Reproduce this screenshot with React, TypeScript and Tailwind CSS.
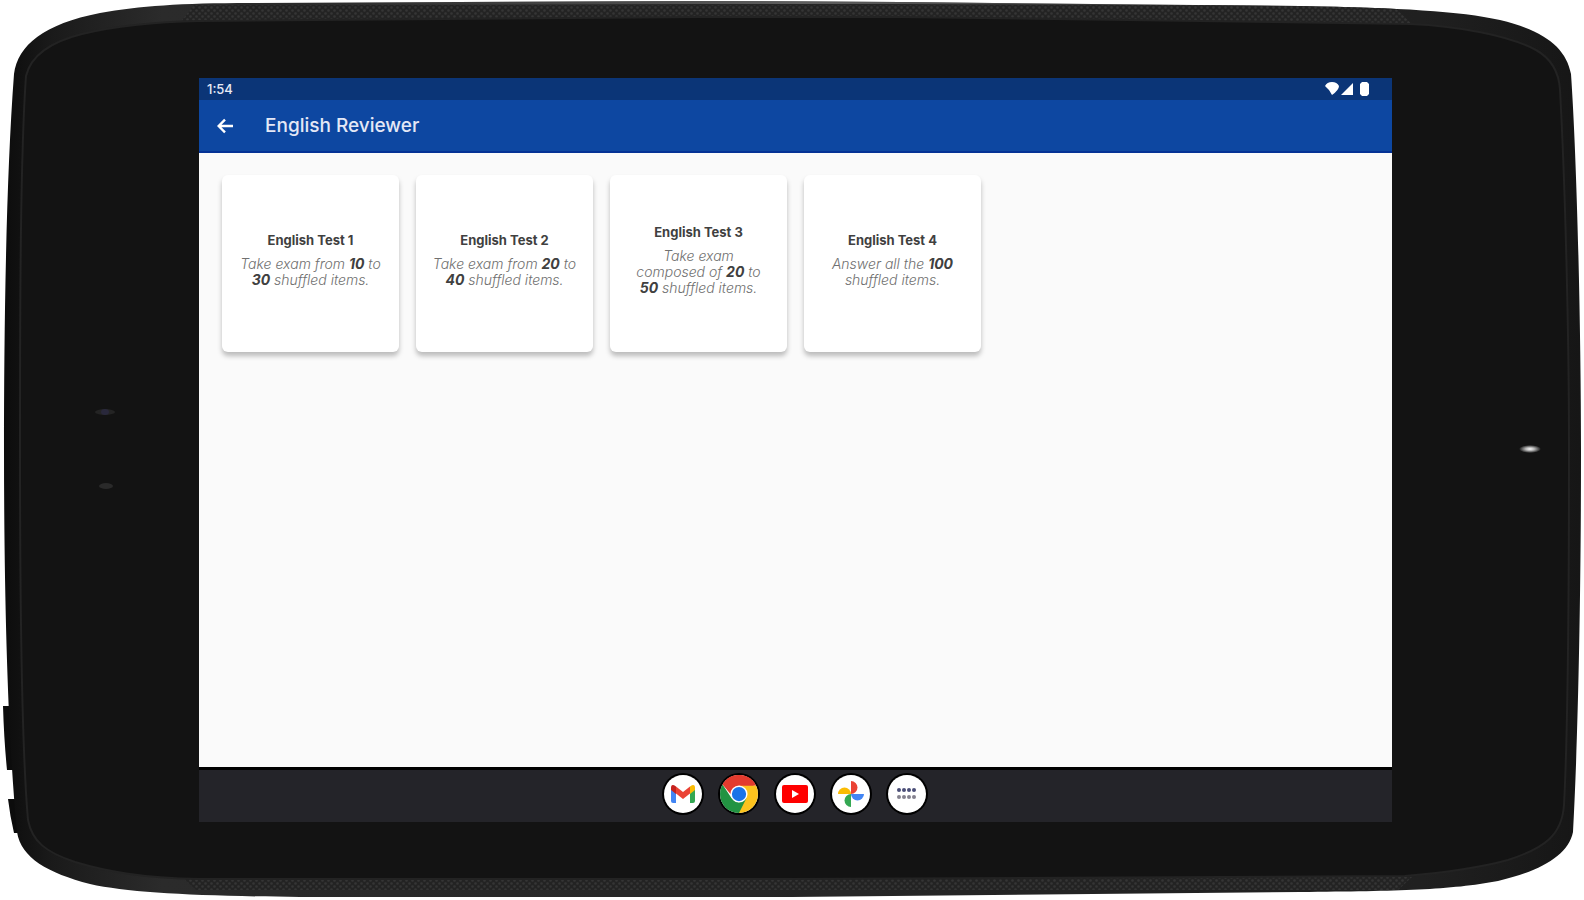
import type { ReactNode } from 'react';

type Exam = {
  id: number;
  title: string;
  description: ReactNode;
};

const exams: Exam[] = [
  {
    id: 1,
    title: 'English Test 1',
    description: (
      <>
        Take exam from <b>10</b> to
        <br />
        <b>30</b> shuffled items.
      </>
    ),
  },
  {
    id: 2,
    title: 'English Test 2',
    description: (
      <>
        Take exam from <b>20</b> to
        <br />
        <b>40</b> shuffled items.
      </>
    ),
  },
  {
    id: 3,
    title: 'English Test 3',
    description: (
      <>
        Take exam
        <br />
        composed of <b>20</b> to
        <br />
        <b>50</b> shuffled items.
      </>
    ),
  },
  {
    id: 4,
    title: 'English Test 4',
    description: (
      <>
        Answer all the <b>100</b>
        <br />
        shuffled items.
      </>
    ),
  },
];

const bodyPath =
  'M4 450C4 330 6 180 14 74C18 45 44 24 100 13C140 6 180 3 250 3L700 1L900 2L1300 6C1400 8 1460 11 1500 20C1545 31 1566 48 1571 74C1577 160 1581 330 1581 450C1581 600 1578 740 1573 832C1568 856 1540 871 1498 881C1450 890 1400 891 1300 892L792 897L300 897C200 896 130 893 90 884C48 873 21 858 17 832C8 740 4 600 4 450Z';

function TabletBody() {
  return (
    <svg
      className="absolute inset-0 h-full w-full"
      viewBox="0 0 1584 900"
      preserveAspectRatio="none"
      aria-hidden="true"
    >
      <defs>
        <pattern id="grille" width="6" height="6" patternUnits="userSpaceOnUse">
          <rect width="6" height="6" fill="#232323" />
          <circle cx="1.5" cy="1.5" r="1.3" fill="#353535" />
          <circle cx="4.5" cy="4.5" r="1.3" fill="#353535" />
        </pattern>
        <clipPath id="body-clip">
          <path d={bodyPath} />
        </clipPath>
        <linearGradient id="rim" x1="0" x2="1" y1="0" y2="0">
          <stop offset="0" stopColor="#0c0c0c" />
          <stop offset="0.03" stopColor="#1a1a1a" />
          <stop offset="0.1" stopColor="#2b2b2b" />
          <stop offset="0.9" stopColor="#202020" />
          <stop offset="1" stopColor="#161616" />
        </linearGradient>
        <linearGradient id="top-shine" x1="0" x2="1" y1="0" y2="0">
          <stop offset="0" stopColor="#5a5a5a" stopOpacity="0" />
          <stop offset="0.5" stopColor="#5e5e5e" />
          <stop offset="1" stopColor="#5a5a5a" stopOpacity="0" />
        </linearGradient>
        <radialGradient id="led">
          <stop offset="0" stopColor="#ffffff" />
          <stop offset="0.4" stopColor="#b5b5b5" />
          <stop offset="1" stopColor="#131313" />
        </radialGradient>
      </defs>
      {/* side buttons */}
      <path d="M3 706H20V770H7Q4 740 3 706zM8 799H24V833H14Q10 816 8 799z" fill="#0c0c0c" />
      <path d={bodyPath} fill="url(#rim)" />
      <g clipPath="url(#body-clip)">
        <path d="M182 20L194 5H1392L1412 24H182z" fill="url(#grille)" />
        <path d="M182 877H1412L1398 890H196z" fill="url(#grille)" />
        <path d="M300 0H1300V6L900 4H700L300 5z" fill="url(#top-shine)" />
      </g>
      <path
        d="M20 450C20 330 20 160 26 76C31 55 50 42 82 34C115 26 150 22 200 21L700 17H900L1410 24C1460 26 1510 36 1536 50C1552 59 1559 72 1560 90C1565 180 1569 330 1569 450C1569 600 1568 730 1564 805C1562 835 1545 848 1508 860C1475 869 1440 873 1405 876L792 879L200 879C140 878 105 871 75 862C45 852 32 841 28 820C21 740 20 600 20 450Z"
        fill="#131313"
        stroke="#232323"
        strokeWidth="2"
      />
      <ellipse cx="105" cy="412" rx="10" ry="3" fill="#242424" />
      <ellipse cx="105" cy="412" rx="4" ry="3" fill="#29283b" />
      <ellipse cx="106" cy="486" rx="7" ry="3" fill="#2a2a2a" />
      <ellipse cx="1530" cy="449" rx="11" ry="4" fill="url(#led)" />
    </svg>
  );
}

function StatusIcons() {
  return (
    <svg className="h-4 w-12" viewBox="0 0 48 16" fill="#ffffff" role="img" aria-label="Wi-Fi, signal, battery">
      <path d="M1 5Q3 1 8 1T15 5Q15 9 8 14Q6 9 1 5z" />
      <path d="M17 14L29 2V14z" />
      <path d="M38 1h5l2 2v10l-2 2h-5l-2-2V3z" />
    </svg>
  );
}

function GmailIcon() {
  return (
    <svg className="h-5 w-7" viewBox="0 0 28 20" aria-hidden="true">
      <path d="M2 4L7 8V19H4Q2 19 2 17z" fill="#4285f4" />
      <path d="M21 8L26 4V17Q26 19 24 19H21z" fill="#34a853" />
      <path d="M21 2.500Q26-1 26 4V6L21 10z" fill="#fbbc04" />
      <path d="M2 6V4Q2-1 7 2.500V10z" fill="#c5221f" />
      <path d="M7 2.500L14 8L21 2.500V9.500L14 15L7 9.500z" fill="#ea4335" />
    </svg>
  );
}

function ChromeIcon() {
  return (
    <svg className="h-full w-full" viewBox="0 0 40 40" aria-hidden="true">
      <path d="M20 20L2.700 10A20 20 0 0 1 37.300 10z" fill="#e33b2e" />
      <path d="M20 20V11H37.800A20 20 0 0 1 20 40z" fill="#fcc31e" />
      <path d="M2.700 10L12.200 24.500L20 29L27.800 24.500L20 40A20 20 0 0 1 2.700 10z" fill="#229342" />
      <path d="M2.700 10A20 20 0 0 1 37.800 11H20L11 20z" fill="#e33b2e" />
      <circle cx="20" cy="20" r="9" fill="#ffffff" />
      <circle cx="20" cy="20" r="7.500" fill="#1a73e8" />
    </svg>
  );
}

function YoutubeIcon() {
  return (
    <svg className="h-5 w-7" viewBox="0 0 28 20" aria-hidden="true">
      <rect x="1" y="1" width="26" height="18" rx="2" fill="#ff0000" />
      <path d="M11 6V14L18 10z" fill="#ffffff" />
    </svg>
  );
}

function PhotosIcon() {
  return (
    <svg className="h-7 w-7" viewBox="0 0 28 28" aria-hidden="true">
      <path d="M14 1A6.500 6.500 0 0 1 14 14z" fill="#ea4335" />
      <path d="M27 14A6.500 6.500 0 0 1 14 14z" fill="#4285f4" />
      <path d="M14 27A6.500 6.500 0 0 1 14 14z" fill="#34a853" />
      <path d="M1 14A6.500 6.500 0 0 1 14 14z" fill="#fbbc04" />
    </svg>
  );
}

function AppsIcon() {
  return (
    <svg className="h-5 w-5" viewBox="0 0 20 20" aria-hidden="true">
      {[2, 7, 12, 17].map((x) => (
        <g key={x}>
          <circle cx={x} cy="6" r="2" fill="#4b4f78" />
          <circle cx={x} cy="13" r="2" fill="#85828f" />
        </g>
      ))}
    </svg>
  );
}

const dockApps = [
  { name: 'Gmail', icon: <GmailIcon /> },
  { name: 'Chrome', icon: <ChromeIcon /> },
  { name: 'YouTube', icon: <YoutubeIcon /> },
  { name: 'Photos', icon: <PhotosIcon /> },
  { name: 'All apps', icon: <AppsIcon /> },
];

function ExamCard({ exam }: { exam: Exam }) {
  return (
    <button
      type="button"
      className="flex aspect-square w-[177px] flex-col items-center justify-center gap-2 rounded-md bg-white px-4 pb-2 text-center shadow-[0_4px_5px_rgba(0,0,0,0.25)]"
    >
      <span className="text-[13px] leading-4 font-bold text-[#404040]">{exam.title}</span>
      <span className="text-sm leading-4 font-light text-[#707070] italic [&_b]:font-bold [&_b]:text-[#404040]">
        {exam.description}
      </span>
    </button>
  );
}

export default function App() {
  return (
    <div className="relative flex min-h-screen flex-col bg-white py-[78px] pr-[192px] pl-[199px] font-['Inter',sans-serif]">
      <TabletBody />
      <div className="relative flex flex-1 flex-col bg-[#fafafa]">
        <div className="flex h-[22px] items-center justify-between bg-[#0b3577] pr-5 pl-2 text-[#e8ebf5]">
          <span className="text-[13px] leading-4 font-medium">1:54</span>
          <StatusIcons />
        </div>
        <header className="flex h-[53px] items-center border-b-2 border-[#043295] bg-[#0d47a1] pr-4 pl-[18px] text-white">
          <button type="button" aria-label="Back" className="flex w-12 items-center">
            <svg className="h-4 w-4" viewBox="0 0 20 20" fill="none" stroke="currentColor" strokeWidth="3">
              <path d="M20 10H3M10 2L2 10L10 18" />
            </svg>
          </button>
          <h1 className="text-[19px] leading-6 font-medium text-[#e4e8f6]">English Reviewer</h1>
        </header>
        <main className="flex flex-1 flex-wrap content-start gap-[17px] px-[23px] py-[22px]">
          {exams.map((exam) => (
            <ExamCard key={exam.id} exam={exam} />
          ))}
        </main>
        <nav className="flex h-[55px] items-center justify-center gap-[18px] border-t-3 border-black bg-[#242429] pr-0.5 pb-1">
          {dockApps.map((app) => (
            <button
              key={app.name}
              type="button"
              aria-label={app.name}
              className="flex h-[38px] w-[38px] items-center justify-center rounded-full bg-white ring-2 ring-black"
            >
              {app.icon}
            </button>
          ))}
        </nav>
      </div>
    </div>
  );
}
